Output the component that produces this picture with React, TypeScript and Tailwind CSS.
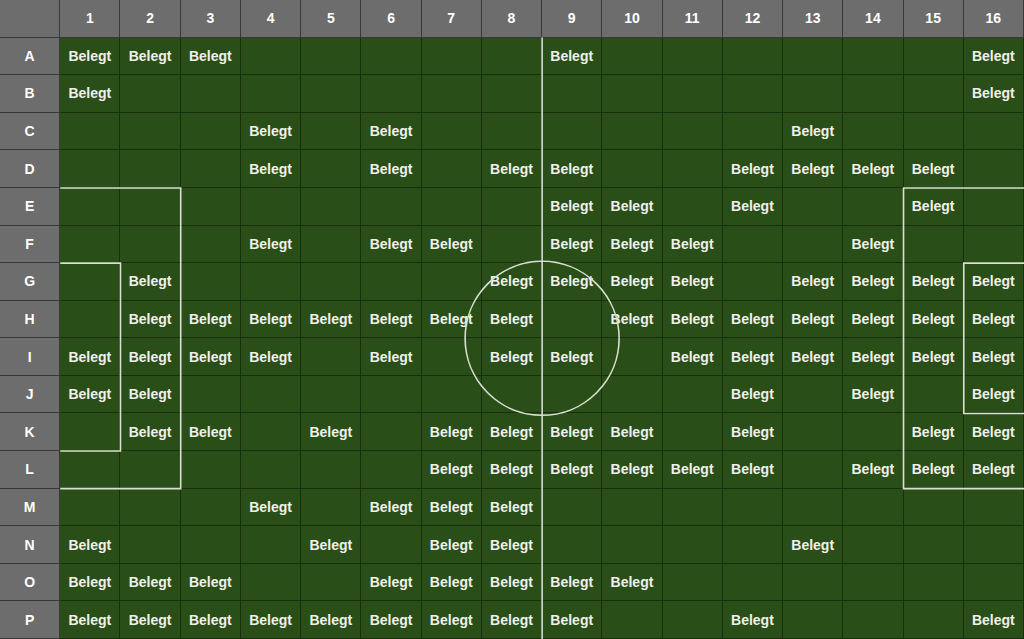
const rows = "ABCDEFGHIJKLMNOP".split("");
const cols = Array.from({ length: 16 }, (_, i) => i + 1);

const taken: Record<string, number[]> = {
  A: [1, 2, 3, 9, 16],
  B: [1, 16],
  C: [4, 6, 13],
  D: [4, 6, 8, 9, 12, 13, 14, 15],
  E: [9, 10, 12, 15],
  F: [4, 6, 7, 9, 10, 11, 14],
  G: [2, 8, 9, 10, 11, 13, 14, 15, 16],
  H: [2, 3, 4, 5, 6, 7, 8, 10, 11, 12, 13, 14, 15, 16],
  I: [1, 2, 3, 4, 6, 8, 9, 11, 12, 13, 14, 15, 16],
  J: [1, 2, 12, 14, 16],
  K: [2, 3, 5, 7, 8, 9, 10, 12, 15, 16],
  L: [7, 8, 9, 10, 11, 12, 14, 15, 16],
  M: [4, 6, 7, 8],
  N: [1, 5, 7, 8, 13],
  O: [1, 2, 3, 6, 7, 8, 9, 10],
  P: [1, 2, 3, 4, 5, 6, 7, 8, 9, 12, 16],
};

// field markings drawn over the grid, in grid units (17 x 17)
const cw = 1024 / 17;
const rh = 639 / 17;

const FieldLines = () => (
  <svg
    className="absolute inset-0 pointer-events-none"
    width={1024}
    height={639}
    viewBox="0 0 1024 639"
  >
    <g fill="none" stroke="#d9e0d2" strokeWidth={1.6}>
      <line x1={9 * cw} y1={rh} x2={9 * cw} y2={639} />
      <circle cx={9 * cw} cy={9 * rh} r={77} />
      {/* left side */}
      <polyline points={`${cw},${5 * rh} ${3 * cw},${5 * rh} ${3 * cw},${13 * rh} ${cw},${13 * rh}`} />
      <polyline points={`${cw},${7 * rh} ${2 * cw},${7 * rh} ${2 * cw},${12 * rh} ${cw},${12 * rh}`} />
      {/* right side */}
      <polyline points={`1024,${5 * rh} ${15 * cw},${5 * rh} ${15 * cw},${13 * rh} 1024,${13 * rh}`} />
      <polyline points={`1024,${7 * rh} ${16 * cw},${7 * rh} ${16 * cw},${11 * rh} 1024,${11 * rh}`} />
    </g>
  </svg>
);

export default function App() {
  return (
    <div
      className="relative w-[1024px] h-[639px] overflow-hidden bg-[#2a4e18]"
      style={{ fontFamily: '"Liberation Sans", Arial, sans-serif' }}
    >
      <div className="grid grid-cols-[repeat(17,1fr)] grid-rows-[repeat(17,1fr)] w-full h-full">
        <div className="bg-[#6d6d6d] border-r border-b border-[#383838]" />
        {cols.map((c) => (
          <div
            key={c}
            className="flex items-center justify-center bg-[#6d6d6d] border-r border-b border-[#383838] text-white text-sm font-bold"
          >
            {c}
          </div>
        ))}
        {rows.map((r) => (
          <div key={r} className="contents">
            <div className="flex items-center justify-center bg-[#6d6d6d] border-r border-b border-[#383838] text-white text-sm font-bold">
              {r}
            </div>
            {cols.map((c) => (
              <div
                key={c}
                className="flex items-center justify-center bg-[#2a4e18] border-r border-b border-[#17300c] text-[#f0f0ec] text-sm font-bold"
              >
                {taken[r].includes(c) ? "Belegt" : ""}
              </div>
            ))}
          </div>
        ))}
      </div>
      <FieldLines />
    </div>
  );
}
